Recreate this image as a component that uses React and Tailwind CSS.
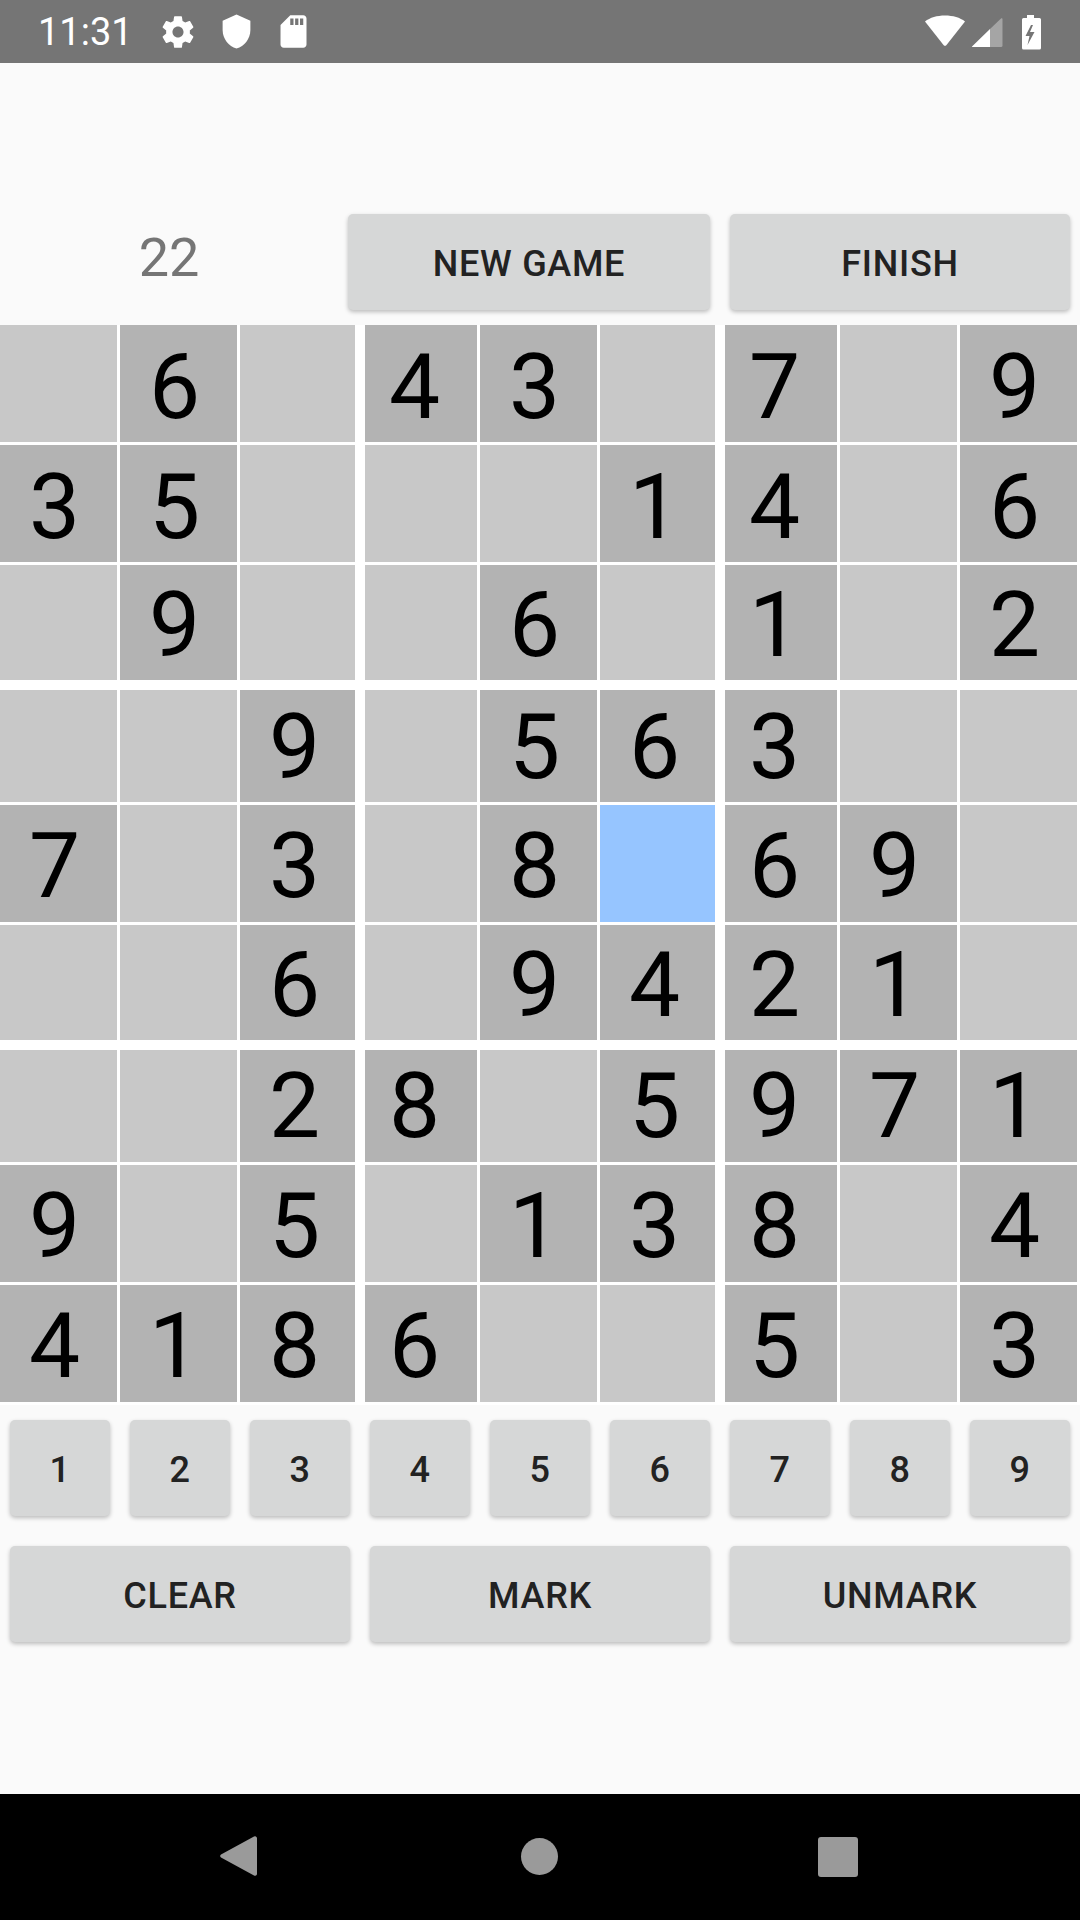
import React from 'react';

const board = [
  '.6.43.7.9',
  '35...14.6',
  '.9..6.1.2',
  '..9.563..',
  '7.3.8x69.',
  '..6.9421.',
  '..28.5971',
  '9.5.138.4',
  '4186..5.3',
];

// each 3x3 box has slightly different track sizes in the original
const rowClasses = ['grid-rows-[117px_117px_115px]', 'grid-rows-[112px_117px_115px]', 'grid-rows-[112px_117px_117px]'];
const colClasses = ['grid-cols-[117px_117px_115px]', 'grid-cols-[112px_117px_115px]', 'grid-cols-[112px_117px_117px]'];

// digits are not quite centred in their cells, nudge per row / column
const rowPad = ['pt-[7px]', 'pt-[7px]', 'pt-[5px]', 'pt-[2px]', 'pt-[5px]', 'pt-[5px]', 'pt-[0px]', 'pt-[5px]', 'pt-[5px]'];
const colPad = ['pr-[8px]', 'pr-[8px]', 'pr-[6px]', 'pr-[13px]', 'pr-[8px]', 'pr-[6px]', 'pr-[13px]', 'pr-[8px]', 'pr-[8px]'];

function StatusBar() {
  return (
    <div className="flex h-[63px] items-center justify-between bg-[#757575] pl-[38px] pr-[36px] text-white">
      <div className="flex items-center">
        <span className="w-[125px] text-[38px] leading-none font-['Roboto',sans-serif]">11:31</span>
        <svg width="38" height="38" viewBox="0 0 24 24" fill="#fff" className="-ml-[4px]">
          <path d="M19.43 12.98c.04-.32.07-.64.07-.98s-.03-.66-.07-.98l2.11-1.65c.19-.15.24-.42.12-.64l-2-3.46c-.12-.22-.39-.3-.61-.22l-2.49 1c-.52-.4-1.08-.73-1.69-.98l-.38-2.65C14.46 2.18 14.25 2 14 2h-4c-.25 0-.46.18-.49.42l-.38 2.65c-.61.25-1.17.59-1.69.98l-2.49-1c-.23-.09-.49 0-.61.22l-2 3.46c-.13.22-.07.49.12.64l2.11 1.65c-.04.32-.07.65-.07.98s.03.66.07.98l-2.11 1.65c-.19.15-.24.42-.12.64l2 3.46c.12.22.39.3.61.22l2.49-1c.52.4 1.08.73 1.69.98l.38 2.65c.03.24.24.42.49.42h4c.25 0 .46-.18.49-.42l.38-2.65c.61-.25 1.17-.59 1.69-.98l2.49 1c.23.09.49 0 .61-.22l2-3.46c.12-.22.07-.49-.12-.64l-2.11-1.65zM12 15.5c-1.93 0-3.5-1.57-3.5-3.5s1.57-3.5 3.5-3.5 3.5 1.57 3.5 3.5-1.57 3.5-3.5 3.5z" />
        </svg>
        <svg width="37" height="37" viewBox="0 0 24 24" fill="#fff" className="ml-[21px]">
          <path d="M12 1L3 5v6c0 5.55 3.84 10.74 9 12 5.16-1.26 9-6.45 9-12V5l-9-4z" />
        </svg>
        <svg width="39" height="39" viewBox="0 0 24 24" fill="#fff" className="ml-[19px]">
          <path d="M18 2h-8L4.02 8 4 20c0 1.1.9 2 2 2h12c1.1 0 2-.9 2-2V4c0-1.1-.9-2-2-2zm-6 6h-2V4h2v4zm3 0h-2V4h2v4zm3 0h-2V4h2v4z" />
        </svg>
      </div>
      <svg width="120" height="40" viewBox="0 0 120 40">
        {/* wifi */}
        <path d="M1 9.5C6 5.5 13 3.5 21 3.5s15 2 20 6L22.5 33a2 2 0 0 1-3 0z" fill="#fff" />
        {/* signal */}
        <path d="M48 34.5L66 17v18H49c-1 0-1.5-.4-1-.5z" fill="#fff" />
        <path d="M66 17L77 6.5c.6-.5 1.5-.2 1.5.8V33.500a1.500 1.500 0 0 1-1.500 1.500H66z" fill="#fff" fillOpacity="0.35" />
        {/* battery */}
        <path fillRule="evenodd" d="M103 3h7v3h5.500a1.500 1.500 0 0 1 1.500 1.500V36a1.500 1.500 0 0 1-1.500 1.500H99.500A1.500 1.500 0 0 1 98 36V7.500A1.500 1.500 0 0 1 99.500 6H103zM107 13l-5.500 11h4l-2 9 7-13h-4.500l3-7z" fill="#fff" />
      </svg>
    </div>
  );
}

function ActionButton({ label, className }) {
  return (
    <button className={`flex items-center justify-center rounded-[5px] bg-[#d6d7d7] pt-[3px] text-[36px] leading-none font-medium tracking-[0.7px] text-[#222222] shadow-[0_2px_4px_rgba(0,0,0,0.25)] font-['Roboto',sans-serif] ${className}`}>
      {label}
    </button>
  );
}

function Cell({ value, row, col }) {
  const color = value === 'x' ? 'bg-[#96c5ff]' : value === '.' ? 'bg-[#c8c8c8]' : 'bg-[#b3b3b3]';
  return (
    <div className={`flex items-center justify-center text-[91px] leading-none text-black font-['Roboto',sans-serif] ${rowPad[row]} ${colPad[col]} ${color}`}>
      {value === 'x' || value === '.' ? '' : value}
    </div>
  );
}

function Box({ boxRow, boxCol }) {
  const cells = [];
  for (let r = boxRow * 3; r < boxRow * 3 + 3; r++) {
    for (let c = boxCol * 3; c < boxCol * 3 + 3; c++) {
      cells.push({ value: board[r][c], row: r, col: c });
    }
  }
  return (
    <div className={`grid gap-[3px] ${rowClasses[boxRow]} ${colClasses[boxCol]}`}>
      {cells.map((cell) => (
        <Cell key={`${cell.row}-${cell.col}`} {...cell} />
      ))}
    </div>
  );
}

function Board() {
  return (
    <div className="mt-[15px] grid h-[1080px] grid-cols-[355px_350px_352px] grid-rows-[355px_350px_352px] gap-[10px] bg-white">
      {[0, 1, 2].map((boxRow) =>
        [0, 1, 2].map((boxCol) => <Box key={`${boxRow}-${boxCol}`} boxRow={boxRow} boxCol={boxCol} />)
      )}
    </div>
  );
}

function NavBar() {
  return (
    <div className="mt-auto flex h-[126px] items-start justify-between bg-black pl-[218px] pr-[222px] pt-[40px]">
      <svg width="40" height="44" viewBox="0 0 40 44" fill="#9a9a9a">
        <path d="M3 20.500L36 2.500 a2 2 0 0 1 3 1.500V40a2 2 0 0 1-3 1.500L3 23.500a2 2 0 0 1 0-3z" />
      </svg>
      <div className="ml-[2px] mt-[4px] h-[37px] w-[37px] rounded-full bg-[#9a9a9a]" />
      <div className="mt-[3px] h-[40px] w-[40px] rounded-[3px] bg-[#9a9a9a]" />
    </div>
  );
}

export default function App() {
  return (
    <div className="flex h-[1920px] w-[1080px] flex-col bg-[#fafafa]">
      <StatusBar />
      <div className="mt-[151px] flex h-[96px] pr-[10px]">
        <div className="w-[338px] pb-[10px] text-center text-[54px] leading-[88px] text-[#757575] font-['Roboto',sans-serif]">22</div>
        <ActionButton label="NEW GAME" className="ml-[10px] w-[362px]" />
        <ActionButton label="FINISH" className="ml-[20px] w-[340px]" />
      </div>
      <Board />
      <div className="mt-[15px] grid h-[96px] grid-cols-9 gap-[20px] px-[10px]">
        {[1, 2, 3, 4, 5, 6, 7, 8, 9].map((n) => (
          <ActionButton key={n} label={n} />
        ))}
      </div>
      <div className="mt-[30px] grid h-[96px] grid-cols-3 gap-[20px] px-[10px]">
        <ActionButton label="CLEAR" />
        <ActionButton label="MARK" />
        <ActionButton label="UNMARK" />
      </div>
      <NavBar />
    </div>
  );
}
